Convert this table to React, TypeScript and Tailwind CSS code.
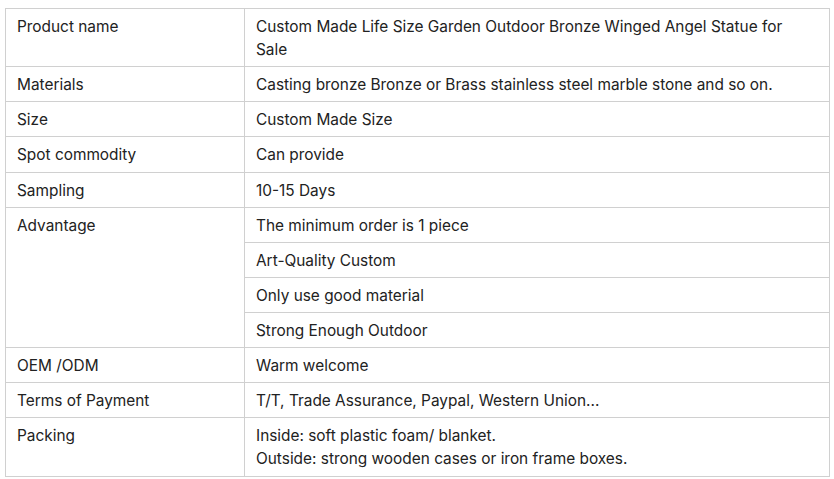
import React from 'react';

type Row = {
  label?: string;
  span?: number;
  value: React.ReactNode;
};

const rows: Row[] = [
  { label: 'Product name', value: 'Custom Made Life Size Garden Outdoor Bronze Winged Angel Statue for Sale' },
  { label: 'Materials', value: 'Casting bronze Bronze or Brass stainless steel marble stone and so on.' },
  { label: 'Size', value: 'Custom Made Size' },
  { label: 'Spot commodity', value: 'Can provide' },
  { label: 'Sampling', value: '10-15 Days' },
  { label: 'Advantage', span: 4, value: 'The minimum order is 1 piece' },
  { value: 'Art-Quality Custom' },
  { value: 'Only use good material' },
  { value: 'Strong Enough Outdoor' },
  { label: 'OEM /ODM', value: 'Warm welcome' },
  { label: 'Terms of Payment', value: 'T/T, Trade Assurance, Paypal, Western Union...' },
  {
    label: 'Packing',
    value: (
      <>
        Inside: soft plastic foam/ blanket.
        <br />
        Outside: strong wooden cases or iron frame boxes.
      </>
    ),
  },
];

const cell = 'border border-[#d0d0d0] pl-[11px] pr-3 pt-[6px] pb-[5px] align-top leading-[1.5]';

export default function App() {
  return (
    <div className="min-h-screen bg-white pt-2 pl-[5px] font-['Inter',sans-serif] text-[15.4px] text-[#222]">
      <table className="w-[825px] border-collapse table-fixed">
        <colgroup>
          <col className="w-[239px]" />
          <col />
        </colgroup>
        <tbody>
          {rows.map((row, i) => (
            <tr key={i}>
              {row.label && (
                <td rowSpan={row.span} className={cell}>
                  {row.label}
                </td>
              )}
              <td className={cell}>{row.value}</td>
            </tr>
          ))}
        </tbody>
      </table>
    </div>
  );
}
